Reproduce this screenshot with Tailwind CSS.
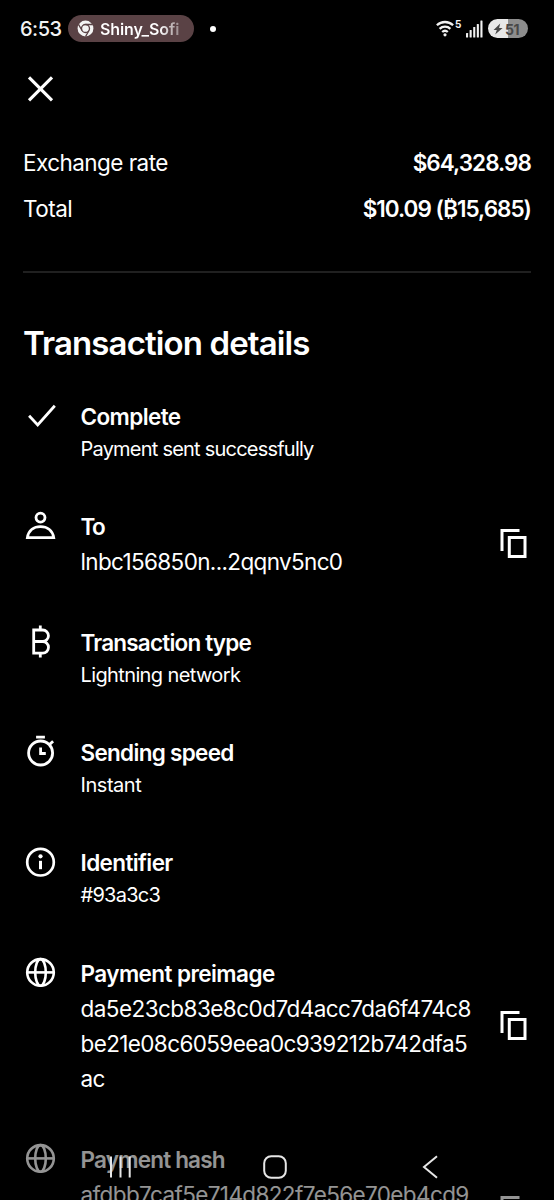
<!DOCTYPE html>
<html lang="en">
<head>
<meta charset="utf-8">
<meta name="viewport" content="width=device-width, initial-scale=1">
<title>Transaction details</title>
<script src="https://cdn.jsdelivr.net/npm/@tailwindcss/browser@4"></script>
</head>
<body class="bg-black">
<div class="relative flex h-[1200px] w-[554px] flex-col overflow-hidden bg-black font-['Inter','Noto_Sans',sans-serif] text-[22.5px] leading-[35px] text-white">

  <!-- Status bar -->
  <header class="flex h-[57px] shrink-0 items-center pl-5 pr-[26px] text-[#f2f2f2]">
    <span class="w-12 pt-px text-[20px] font-medium tracking-[-0.5px]">6:53</span>
    <div class="flex h-[27px] w-[126px] items-center gap-[6px] rounded-full bg-[#5a4245] pl-[9px]">
      <svg class="h-[17px] w-[17px] shrink-0" viewBox="0 0 17 17">
        <circle cx="8.5" cy="8.5" r="7.9" fill="#f4f4f4"/>
        <circle cx="8.5" cy="8.5" r="4" fill="none" stroke="#5a4245" stroke-width="1.3"/>
        <path d="M8.5 4.5H15.6M5 10.5L1.5 4.4M12 10.5L8.5 16.6" stroke="#5a4245" stroke-width="1.3" fill="none"/>
      </svg>
      <span class="bg-gradient-to-r from-white from-75% to-white/40 bg-clip-text pt-px text-[16px] font-semibold leading-[27px] tracking-[-0.1px] text-transparent">Shiny_Sofi</span>
    </div>
    <span class="ml-[16px] h-[6px] w-[6px] rounded-full bg-white"></span>
    <div class="ml-auto flex items-center">
      <svg class="h-[20px] w-[18px]" viewBox="0 0 18 20" fill="none" stroke="#f2f2f2" stroke-width="2.3">
        <path d="M.9 6.3a11.6 11.6 0 0 1 16.2 0M3.6 9.8a7.8 7.8 0 0 1 10.8 0M6.2 13a4.2 4.2 0 0 1 5.6 0"/>
        <circle cx="9" cy="15.8" r="1.6" fill="#f2f2f2" stroke="none"/>
      </svg>
      <span class="mb-[10px] ml-px w-[11px] text-[10px] font-bold leading-[10px]">5</span>
      <svg class="h-[20px] w-[17px]" viewBox="0 0 17 20" fill="#f2f2f2">
        <rect x="0" y="14" width="2.1" height="4.4" rx=".5"/><rect x="3.6" y="11" width="2.1" height="7.4" rx=".5"/><rect x="7.2" y="8" width="2.1" height="10.4" rx=".5"/><rect x="10.8" y="5" width="2.1" height="13.4" rx=".5"/><rect x="14.4" y="1.4" width="2.1" height="17" rx=".5"/>
      </svg>
      <div class="ml-[5px] flex h-[19px] w-[40px] items-center rounded-full bg-linear-to-r from-[#e8e8e8] from-50% to-[#8d8d8d] to-50% pl-[5px] text-[#484848]">
        <svg class="h-[12px] w-[10px]" viewBox="0 0 10 12" fill="#484848"><path d="M7.2.6L.6 6.9h3.2L2.2 11.6 9.6 5H6.1z"/></svg>
        <span class="ml-[2px] pt-px text-[14px] font-bold leading-[19px] tracking-[-0.5px]">51</span>
      </div>
    </div>
  </header>

  <!-- Close -->
  <div class="h-[88px] shrink-0 pl-[27px] pt-[18px]">
    <svg class="h-[27px] w-[27px]" viewBox="0 0 27 27" stroke="#fff" stroke-width="3.1"><path d="M2 2.3L25 25.3M25 2.3L2 25.3"/></svg>
  </div>

  <!-- Amounts -->
  <section class="mx-[23px] h-[128px] shrink-0 border-b-2 border-[#202020]">
    <div class="flex h-[46px] justify-between"><span class="tracking-[-0.55px]">Exchange rate</span><span class="font-semibold tracking-[-0.95px]">$64,328.98</span></div>
    <div class="flex justify-between"><span class="tracking-[-0.5px]">Total</span><span class="font-semibold tracking-[-1px]">$10.09 (₿15,685)</span></div>
  </section>

  <h1 class="mt-[50px] ml-[23px] h-[76px] shrink-0 text-[33px] font-semibold leading-[40px] tracking-[-0.88px]">Transaction details</h1>

  <!-- Details -->
  <main class="flex flex-col px-[24px]">
    <div class="flex h-[110px] shrink-0">
      <svg class="h-8 w-8 overflow-visible" viewBox="-0.5 0 32 32" fill="none" stroke="#fff" stroke-width="2.8"><path d="M4.6 16.8L13.2 26L30.3 6.8"/></svg>
      <div class="ml-[24.5px]">
        <div class="font-semibold tracking-[-0.6px]">Complete</div>
        <div class="text-[20px] leading-[30px] tracking-[-0.78px]">Payment sent successfully</div>
      </div>
    </div>
    <div class="flex h-[116px] shrink-0">
      <svg class="h-8 w-8 overflow-visible" viewBox="-0.5 0 32 32" fill="none" stroke="#fff" stroke-width="2.8"><circle cx="16" cy="8.6" r="4.5"/><path d="M2.9 28.7C4 21.4 9.5 17.7 16 17.7S28 21.4 29.2 28.7Z"/></svg>
      <div class="ml-[24.5px]">
        <div class="font-semibold tracking-[-1.6px]">To</div>
        <div class="tracking-[-0.65px]">lnbc156850n...2qqnv5nc0</div>
      </div>
      <svg class="mt-[19px] ml-auto h-[31px] w-[30px]" viewBox="0 0 30 31" fill="none" stroke="#fff" stroke-width="3"><path d="M19.5 2.4H2V23M9.3 9.4H25V28.6H9.3z"/></svg>
    </div>
    <div class="flex h-[110px] shrink-0">
      <svg class="h-8 w-8 overflow-visible" viewBox="-0.5 0 32 32" fill="none" stroke="#fff" stroke-width="2.8"><path d="M7.8 5H18.2a5.7 5.7 0 0 1 0 11.5H9.2M18.2 16.5a5.8 5.8 0 0 1 0 11.6H7.8M9.2 5V28M15.8.6V5M15.8 28V32.5"/></svg>
      <div class="ml-[24.5px]">
        <div class="font-semibold tracking-[-0.8px]">Transaction type</div>
        <div class="text-[20px] leading-[30px] tracking-[-0.62px]">Lightning network</div>
      </div>
    </div>
    <div class="flex h-[110px] shrink-0">
      <svg class="h-8 w-8 overflow-visible" viewBox="-0.5 0 32 32" fill="none" stroke="#fff" stroke-width="2.8"><circle cx="16.1" cy="18" r="12"/><path d="M11.6 2.2H20.4M24.6 9.9L28.6 6.2M16.1 12.5V18.5H21.3"/></svg>
      <div class="ml-[24.5px]">
        <div class="font-semibold tracking-[-0.7px]">Sending speed</div>
        <div class="text-[20px] leading-[30px] tracking-[-0.45px]">Instant</div>
      </div>
    </div>
    <div class="flex h-[111px] shrink-0">
      <svg class="h-8 w-8 overflow-visible" viewBox="-0.5 0 32 32" fill="none" stroke="#fff" stroke-width="2.7"><circle cx="16" cy="17.2" r="13.3"/><circle cx="16" cy="11.3" r="2.1" fill="#fff" stroke="none"/><path d="M16 15.8V24.2" stroke-width="3"/></svg>
      <div class="ml-[24.5px]">
        <div class="font-semibold tracking-[-0.6px]">Identifier</div>
        <div class="text-[20px] leading-[30px] tracking-[-0.75px]">#93a3c3</div>
      </div>
    </div>
    <div class="flex h-[186px] shrink-0">
      <svg class="h-8 w-8 overflow-visible" viewBox="-0.5 0 32 32" fill="none" stroke="#fff" stroke-width="2.6"><circle cx="16" cy="16.4" r="13.3"/><ellipse cx="16" cy="16.4" rx="5.3" ry="13.3"/><path d="M2.7 16.4H29.3"/></svg>
      <div class="ml-[24.5px]">
        <div class="font-semibold tracking-[-0.57px]">Payment preimage</div>
        <div class="tracking-[-0.55px]">da5e23cb83e8c0d7d4acc7da6f474c8</div>
        <div class="tracking-[-0.62px]">be21e08c6059eea0c939212b742dfa5</div>
        <div class="tracking-[-0.6px]">ac</div>
      </div>
      <svg class="mt-[54px] ml-auto h-[31px] w-[30px]" viewBox="0 0 30 31" fill="none" stroke="#fff" stroke-width="3"><path d="M19.5 2.4H2V23M9.3 9.4H25V28.6H9.3z"/></svg>
    </div>
    <div class="flex h-[140px] shrink-0">
      <svg class="h-8 w-8 overflow-visible" viewBox="-0.5 0 32 32" fill="none" stroke="#fff" stroke-width="2.6"><circle cx="16" cy="16.4" r="13.3"/><ellipse cx="16" cy="16.4" rx="5.3" ry="13.3"/><path d="M2.7 16.4H29.3"/></svg>
      <div class="ml-[24.5px]">
        <div class="font-semibold tracking-[-0.8px]">Payment hash</div>
        <div class="tracking-[-0.62px]">afdbb7caf5e714d822f7e56e70eb4cd9</div>
      </div>
      <svg class="mt-[53px] ml-auto h-[31px] w-[30px]" viewBox="0 0 30 31" fill="none" stroke="#fff" stroke-width="3"><path d="M19.5 2.4H2V23M9.3 9.4H25V28.6H9.3z"/></svg>
    </div>
  </main>

  <!-- System navigation over the scrolled list -->
  <nav class="absolute inset-x-0 bottom-0 flex h-[66px] items-center bg-black/42 pl-[109px]">
    <svg class="h-[24px] w-[22px]" viewBox="0 0 22 24" stroke="#e6e6e6" stroke-width="2"><path d="M2 1.5V22.5M11.5 1.5V22.5M20.7 1.5V22.5"/></svg>
    <svg class="ml-[132px] h-[24px] w-[24px]" viewBox="0 0 24 24" fill="none" stroke="#e6e6e6" stroke-width="2"><rect x="1.2" y="1.2" width="21.6" height="21.6" rx="7"/></svg>
    <svg class="ml-[135px] h-[24px] w-[16px]" viewBox="0 0 16 24" fill="none" stroke="#e6e6e6" stroke-width="2"><path d="M15 1.2L2 12L15 22.8"/></svg>
  </nav>
</div>
</body>
</html>
